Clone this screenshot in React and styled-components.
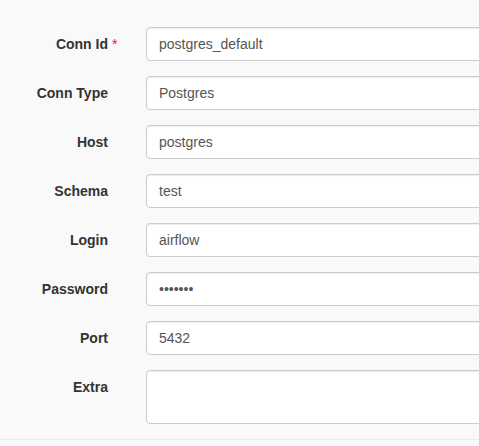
import React from "react";
import styled, { createGlobalStyle } from "styled-components";

const Global = createGlobalStyle`
  html, body { margin: 0; padding: 0; background: #f9f9f9; }
  body { font-family: "Liberation Sans", Arial, sans-serif; font-size: 14px; color: #333; overflow: hidden; }
`;

const Page = styled.div`
  width: 479px;
  height: 446px;
  overflow: hidden;
  background: #f9f9f9;
`;

const Form = styled.form`
  padding-top: 27px;
  border-bottom: 1px solid #ebebeb;
  width: 600px;
`;

const Row = styled.div`
  display: grid;
  grid-template-columns: 108px 420px;
  column-gap: 38px;
  margin-bottom: 15px;
`;

const Label = styled.label`
  position: relative;
  text-align: right;
  font-weight: bold;
  line-height: 20px;
  padding-top: 7px;
  color: #333;
`;

const Req = styled.span`
  position: absolute;
  left: 100%;
  margin-left: 4px;
  color: #e8174b;
  font-weight: normal;
`;

const Input = styled.input`
  box-sizing: border-box;
  width: 100%;
  height: 34px;
  padding: 6px 12px;
  border: 1px solid #ccc;
  border-radius: 4px;
  background: #fff;
  font-family: "Liberation Sans", Arial, sans-serif;
  font-size: 14px;
  color: #555;
  outline: none;
  box-shadow: inset 0 1px 1px rgba(0, 0, 0, 0.075);
`;

const TextArea = styled.textarea`
  box-sizing: border-box;
  width: 100%;
  height: 54px;
  padding: 6px 12px;
  border: 1px solid #ccc;
  border-radius: 4px;
  background: #fff;
  font-family: "Liberation Sans", Arial, sans-serif;
  font-size: 14px;
  color: #555;
  outline: none;
  resize: none;
  display: block;
  box-shadow: inset 0 1px 1px rgba(0, 0, 0, 0.075);
`;

const fields = [
  { label: "Conn Id", value: "postgres_default", required: true },
  { label: "Conn Type", value: "Postgres" },
  { label: "Host", value: "postgres" },
  { label: "Schema", value: "test" },
  { label: "Login", value: "airflow" },
  { label: "Password", value: "airflow", type: "password" },
  { label: "Port", value: "5432" },
];

export default function App() {
  return (
    <Page>
      <Global />
      <Form onSubmit={(e) => e.preventDefault()}>
        {fields.map((f) => (
          <Row key={f.label}>
            <Label>
              {f.label}
              {f.required && <Req>*</Req>}
            </Label>
            <Input type={f.type || "text"} defaultValue={f.value} readOnly />
          </Row>
        ))}
        <Row>
          <Label>Extra</Label>
          <TextArea readOnly defaultValue="" />
        </Row>
      </Form>
    </Page>
  );
}
